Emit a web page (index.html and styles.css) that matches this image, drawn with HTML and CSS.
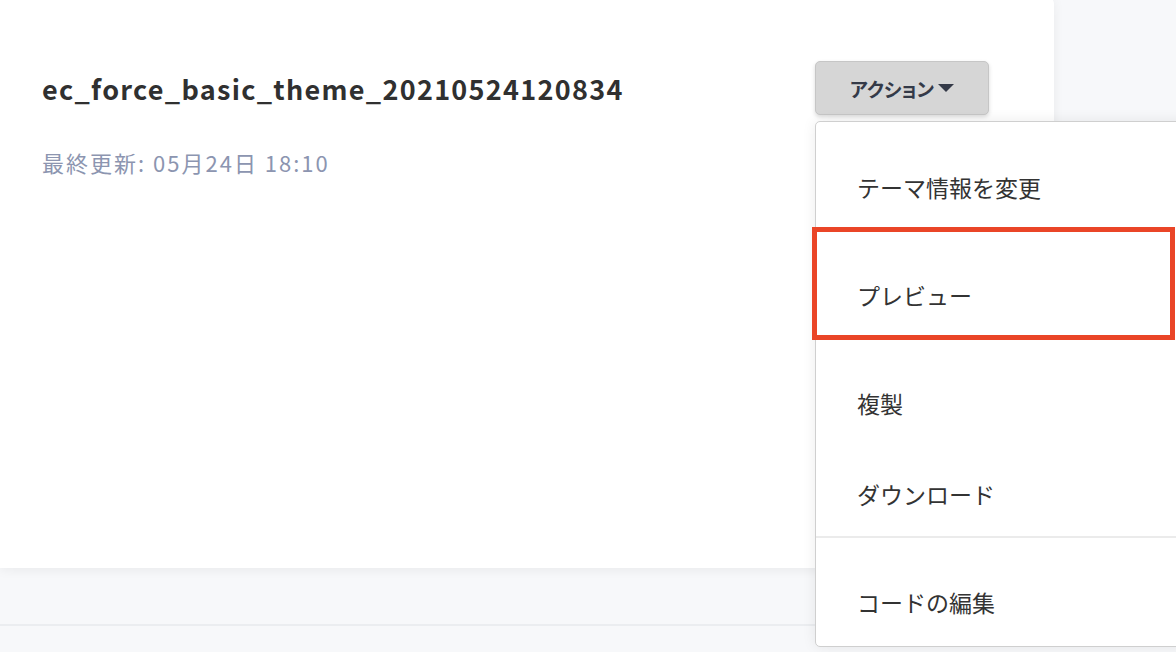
FILE: index.html
```html
<!DOCTYPE html>
<html lang="ja">
<head>
    <meta charset="UTF-8">
    <meta name="viewport" content="width=device-width, initial-scale=1.0">
    <title>テーマ</title>
    <link rel="stylesheet" href="styles.css">
</head>
<body>

    <div class="theme-card">
        <div class="theme-header">
            <h2 class="theme-name">ec_force_basic_theme_20210524120834</h2>

            <div class="dropdown">
                <button class="action-btn">アクション<span class="caret"></span></button>

                <ul class="dropdown-menu">
                    <li class="menu-item">テーマ情報を変更</li>
                    <li class="menu-item">プレビュー</li>
                    <li class="menu-item">複製</li>
                    <li class="menu-item menu-item-last">ダウンロード</li>
                    <li class="menu-divider"></li>
                    <li class="menu-item menu-item-code">コードの編集</li>
                </ul>

                <!-- annotation around the preview item -->
                <div class="highlight-box"></div>
            </div>
        </div>

        <p class="updated-at">最終更新: 05月24日 18:10</p>
    </div>

    <div class="page-footer"></div>

</body>
</html>
```

FILE: styles.css
```css
/* Global styles */
html, body {
    margin: 0;
    padding: 0;
    height: 100%;
    overflow: hidden;
}

body {
    background-color: #f7f8fa;
    font-family: "Noto Sans CJK JP", "Noto Sans", sans-serif;
    color: #333;
}

/* Theme card */
.theme-card {
    width: 1054px;
    height: 572px;
    margin-top: -4px;
    box-sizing: border-box;
    padding: 65px 65px 0 42px;
    background-color: #fff;
    border-radius: 0 8px 8px 0;
    box-shadow: 0 2px 12px rgba(0, 0, 0, 0.06);
}

.theme-header {
    display: flex;
    align-items: center;
    justify-content: space-between;
}

.theme-name {
    margin: 0;
    font-size: 27px;
    font-weight: bold;
    color: #303030;
    letter-spacing: 1.3px;
}

.updated-at {
    margin: 32px 0 0;
    font-size: 22px;
    line-height: 30px;
    letter-spacing: 2px;
    color: #8c95b0;
}

/* Action dropdown */
.dropdown {
    position: relative;
}

.action-btn {
    width: 174px;
    height: 54px;
    display: flex;
    align-items: center;
    justify-content: center;
    gap: 4px;
    background-color: #d6d6d6;
    border: 1px solid #c6c6c6;
    border-radius: 5px;
    box-shadow: 0 2px 4px rgba(0, 0, 0, 0.15);
    font-family: inherit;
    font-size: 19px;
    font-weight: bold;
    color: #343a48;
    font-feature-settings: "palt";
    cursor: pointer;
}

.caret {
    width: 0;
    height: 0;
    border-left: 8px solid transparent;
    border-right: 8px solid transparent;
    border-top: 8px solid #343a48;
}

.dropdown-menu {
    position: absolute;
    top: 60px;
    left: 0;
    width: 372px;
    margin: 0;
    padding: 11px 0 0;
    list-style: none;
    background-color: #fff;
    border: 1px solid #cfcfcf;
    border-radius: 5px;
    box-shadow: 0 0 14px rgba(0, 0, 0, 0.08);
    z-index: 10;
}

.menu-item {
    padding: 38px 0 38px 41px;
    font-size: 23px;
    line-height: 32px;
    color: #333;
}

.menu-item-last {
    padding-top: 21px;
    padding-bottom: 26px;
}

.menu-divider {
    height: 2px;
    background-color: #ebebeb;
}

.menu-item-code {
    padding-top: 48px;
    padding-bottom: 28px;
}

.highlight-box {
    position: absolute;
    top: 166px;
    left: -3px;
    width: 363px;
    height: 113px;
    box-sizing: border-box;
    border: 5px solid #ea4527;
    z-index: 11;
}

/* Bottom bar */
.page-footer {
    margin-top: 56px;
    height: 40px;
    border-top: 2px solid #ebedf0;
}
```
